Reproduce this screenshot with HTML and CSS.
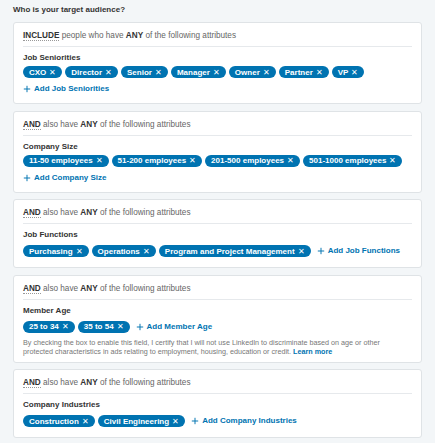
FILE: index.html
```html
<!DOCTYPE html>
<html lang="en">
<head>
  <meta charset="UTF-8">
  <title>Target audience</title>
  <link rel="stylesheet" href="styles.css">
</head>
<body>
  <h2 class="title">Who is your target audience?</h2>

  <div class="card">
    <div class="card-head"><span class="op">INCLUDE</span> people who have <strong>ANY</strong> of the following attributes</div>
    <div class="facet">
      <div class="facet-label">Job Seniorities</div>
      <div class="pills">
        <span class="pill">CXO <i>✕</i></span>
        <span class="pill">Director <i>✕</i></span>
        <span class="pill">Senior <i>✕</i></span>
        <span class="pill">Manager <i>✕</i></span>
        <span class="pill">Owner <i>✕</i></span>
        <span class="pill">Partner <i>✕</i></span>
        <span class="pill">VP <i>✕</i></span>
      </div>
      <a class="add add-block" href="#"><svg viewBox="0 0 10 10"><path d="M5 1v8M1 5h8"/></svg>Add Job Seniorities</a>
    </div>
  </div>

  <div class="card">
    <div class="card-head"><span class="op">AND</span> also have <strong>ANY</strong> of the following attributes</div>
    <div class="facet">
      <div class="facet-label">Company Size</div>
      <div class="pills">
        <span class="pill">11-50 employees <i>✕</i></span>
        <span class="pill">51-200 employees <i>✕</i></span>
        <span class="pill">201-500 employees <i>✕</i></span>
        <span class="pill">501-1000 employees <i>✕</i></span>
      </div>
      <a class="add add-block" href="#"><svg viewBox="0 0 10 10"><path d="M5 1v8M1 5h8"/></svg>Add Company Size</a>
    </div>
  </div>

  <div class="card">
    <div class="card-head"><span class="op">AND</span> also have <strong>ANY</strong> of the following attributes</div>
    <div class="facet">
      <div class="facet-label">Job Functions</div>
      <div class="pills">
        <span class="pill">Purchasing <i>✕</i></span>
        <span class="pill">Operations <i>✕</i></span>
        <span class="pill">Program and Project Management <i>✕</i></span>
        <a class="add" href="#"><svg viewBox="0 0 10 10"><path d="M5 1v8M1 5h8"/></svg>Add Job Functions</a>
      </div>
    </div>
  </div>

  <div class="card">
    <div class="card-head"><span class="op">AND</span> also have <strong>ANY</strong> of the following attributes</div>
    <div class="facet">
      <div class="facet-label">Member Age</div>
      <div class="pills">
        <span class="pill">25 to 34 <i>✕</i></span>
        <span class="pill">35 to 54 <i>✕</i></span>
        <a class="add" href="#"><svg viewBox="0 0 10 10"><path d="M5 1v8M1 5h8"/></svg>Add Member Age</a>
      </div>
      <p class="note">By checking the box to enable this field, I certify that I will not use LinkedIn to discriminate based on age or other protected characteristics in ads relating to employment, housing, education or credit. <a href="#">Learn more</a></p>
    </div>
  </div>

  <div class="card">
    <div class="card-head"><span class="op">AND</span> also have <strong>ANY</strong> of the following attributes</div>
    <div class="facet">
      <div class="facet-label">Company Industries</div>
      <div class="pills">
        <span class="pill">Construction <i>✕</i></span>
        <span class="pill">Civil Engineering <i>✕</i></span>
        <a class="add" href="#"><svg viewBox="0 0 10 10"><path d="M5 1v8M1 5h8"/></svg>Add Company Industries</a>
      </div>
    </div>
  </div>
</body>
</html>
```

FILE: styles.css
```css
body {
  margin: 0;
  padding: 4px 13px 0;
  background: #f3f6f8;
  font-family: "Liberation Sans", Arial, sans-serif;
  font-size: 8.2px;
  color: #333;
}
.title {
  margin: 0 0 6px;
  font-size: 8px;
  line-height: 12px;
  font-weight: bold;
  color: #333;
}
.card {
  background: #fff;
  border: 1px solid #dfe3e6;
  border-radius: 3px;
  padding: 7px 9px 8px;
  margin-bottom: 6.6px;
}
.card-head {
  line-height: 12px;
  padding-bottom: 4px;
  border-bottom: 1px solid #e6e9ec;
  color: #666;
}
.card-head strong { color: #333; }
.op {
  color: #333;
  font-weight: bold;
  border-bottom: 1px dotted #999;
}
.facet { padding-top: 5px; }
.facet-label {
  font-size: 8px;
  font-weight: bold;
  color: #333;
  line-height: 12px;
  margin-bottom: 2px;
}
.pills {
  display: flex;
  flex-wrap: wrap;
  align-items: center;
  gap: 3px;
}
.pill {
  display: inline-flex;
  align-items: center;
  height: 12px;
  padding: 0 6px;
  border-radius: 7px;
  background: #0073b1;
  color: #fff;
  font-size: 8px;
  font-weight: bold;
}
.pill i {
  font-style: normal;
  font-weight: normal;
  font-size: 8px;
  margin-left: 3px;
}
.add {
  display: inline-flex;
  align-items: center;
  color: #0073b1;
  font-size: 8px;
  font-weight: bold;
  line-height: 16px;
  text-decoration: none;
  margin-left: 3px;
}
.add svg {
  width: 8px;
  height: 8px;
  margin-right: 3px;
  stroke: #0073b1;
  stroke-width: 1.2;
  fill: none;
}
.add-block {
  margin: 5px 0 0;
  line-height: 12px;
}
.note {
  max-width: 372px;
  margin: 3px 0 -2px;
  font-size: 7.2px;
  line-height: 9px;
  color: #777;
}
.note a {
  color: #0073b1;
  font-weight: bold;
  text-decoration: none;
}
```
